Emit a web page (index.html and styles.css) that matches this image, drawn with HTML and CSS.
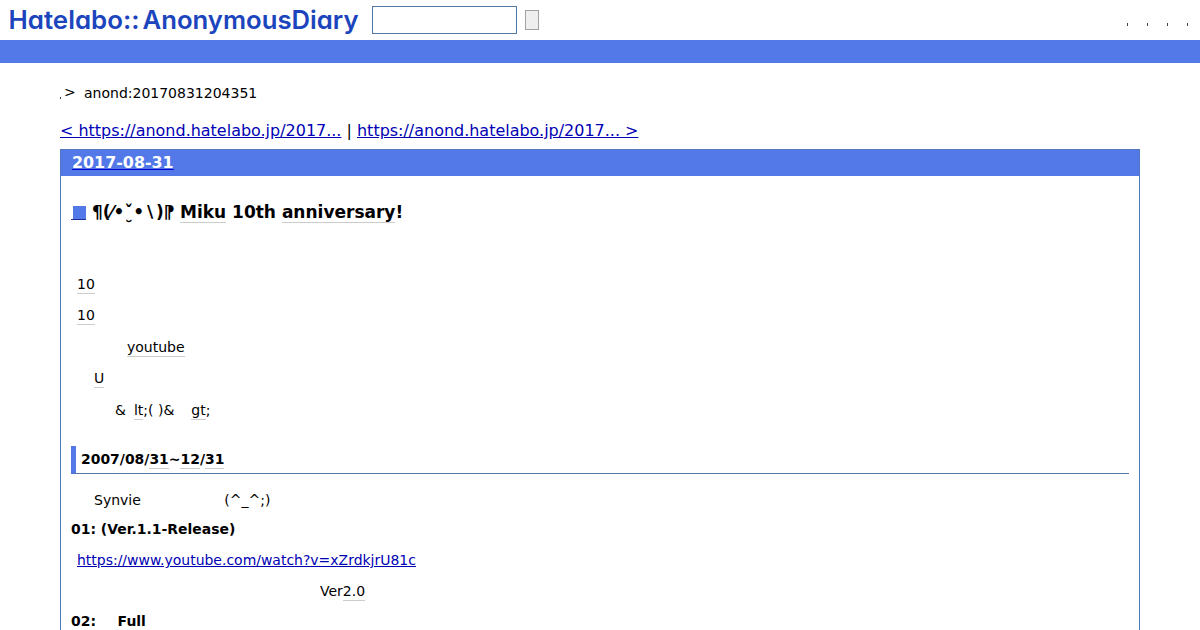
FILE: index.html
```html
<!DOCTYPE html>
<html lang="ja">
<head>
<meta charset="utf-8">
<title>Hatelabo::AnonymousDiary</title>
<link rel="stylesheet" href="styles.css">
</head>
<body>
<header class="header">
  <svg class="logo" width="362" height="40" viewBox="0 0 362 40">
    <text x="8.5" y="28.8" textLength="131" lengthAdjust="spacingAndGlyphs">Hatelabo::</text>
    <text x="142.5" y="28.8" textLength="216" lengthAdjust="spacingAndGlyphs">AnonymousDiary</text>
  </svg>
  <input class="search" type="text" aria-label="Search">
  <button class="submit" type="button" aria-label="Search"></button>
  <nav class="tools"><i></i><i></i><i></i><i></i></nav>
</header>
<div class="bar"></div>
<main class="main">
  <div class="crumbs"><i class="dot"></i><span class="gt">&gt;</span><span>anond:20170831204351</span></div>
  <div class="pager"><a href="#">&lt; https://anond.hatelabo.jp/2017...</a> | <a href="#">https://anond.hatelabo.jp/2017... &gt;</a></div>
  <article class="day">
    <h2 class="date"><a href="#">2017-08-31</a></h2>
    <div class="body">
      <h3 class="title"><a class="mark" href="#"><span class="square"></span></a><span class="face">¶(⁄•<span class="nose">ˇ&#x32E;</span>•∖)⁋</span><span><span class="key">Miku</span> 10th <span class="key">anniversary</span>!</span></h3>
      <p class="row"><span class="key">10</span></p>
      <p class="row"><span class="key">10</span></p>
      <p class="row youtube"><span class="key">youtube</span></p>
      <p class="row indent"><span class="key">U</span></p>
      <p class="row entity"><span class="amp">&amp;</span><span class="key">lt</span>;( )&amp;<span class="key after">gt</span>;</p>
      <h4 class="period">2007/08/<span class="key">31</span>~<span class="key">12</span>/<span class="key">31</span></h4>
      <p class="row indent synvie">Synvie<span class="smile">(^_^;)</span></p>
      <h5 class="song">01: (Ver.1.1-Release)</h5>
      <p class="row link"><a href="#">https://www.youtube.com/watch?v=xZrdkjrU81c</a></p>
      <p class="row version">Ver<span class="key">2.0</span></p>
      <h5 class="song">02:<span class="full">Full</span></h5>
    </div>
  </article>
</main>
</body>
</html>
```
FILE: styles.css
```css
* { box-sizing: border-box; }
html { height: 630px; overflow: hidden; }
body { margin: 0; height: 630px; overflow: hidden; background: #fff; color: #000; font: 14px "DejaVu Sans", sans-serif; }
h2, h3, h4, h5, p { margin: 0; }
a { color: #0000b4; }
.header { display: flex; align-items: center; height: 40px; }
.logo { display: block; fill: #1c45bd; font: 600 25.5px Inter, sans-serif; font-feature-settings: "cv11"; }
.search { width: 145px; height: 28px; margin-left: 10px; padding: 0 4px; border: 1px solid #5279a8; background: #fff; }
.submit { width: 14px; height: 20px; margin-left: 8px; padding: 0; border: 1px solid #a2a2a2; background: #efefef; }
.tools { display: flex; gap: 19px; margin: 9px 12px 0 auto; }
.tools i { width: 1px; height: 3px; background: #444; }
.bar { height: 23px; background: #5279e7; }
.main { padding: 20px 60px 0; }
.crumbs { display: flex; height: 20px; line-height: 20px; }
.dot { width: 1px; height: 2px; margin-top: 14px; background: #444; }
.gt { width: 20px; margin-left: 3px; line-height: 18px; }
.pager { height: 24px; margin-top: 16px; font-size: 15.98px; line-height: 24px; white-space: nowrap; }
.day { height: 481px; margin-top: 6px; border: 1px solid #5279c0; border-bottom: 0; overflow: hidden; }
.date { height: 26px; padding-left: 11px; background: #5279e7; font-size: 15.9px; line-height: 25px; }
.date a { color: #fff; text-decoration-color: #0000d0; }
.body { padding: 0 10px; }
.title { display: flex; height: 93px; padding-top: 24px; font-size: 17px; line-height: 24px; white-space: nowrap; }
.mark { width: 15px; height: 20px; padding-top: 6px; text-decoration: none; }
.square { display: block; width: 15px; height: 13px; border-left: 2px solid #fff; background: #5279e7; box-shadow: 0 1px #1c2f96; }
.face { width: 88px; margin-left: 6px; }
.nose { display: inline-block; width: 9px; font-size: 17px; text-align: center; }
.key { border-bottom: 1px solid #ccc; }
.row { height: 31.4px; padding-left: 6px; line-height: 31px; white-space: pre; }
.youtube { padding-left: 56px; }
.indent { padding-left: 23px; }
.entity { padding-left: 44px; }
.amp { margin-right: 8px; }
.after { margin-left: 17px; }
.row .key, .period .key { padding-bottom: 1px; }
.period { height: 28px; margin-top: 20px; padding-left: 5px; border-left: 5px solid #5279e7; border-bottom: 1px solid #5279a8; font-size: 13.95px; line-height: 27px; }
.synvie { height: 29.6px; margin-top: 11px; }
.smile { margin-left: 83.5px; }
.song { height: 28px; font-size: 13.95px; line-height: 28px; }
.link { height: 31px; margin-top: 2.8px; font-size: 13.97px; }
.version { height: 30.8px; padding-left: 249px; }
.full { margin-left: 21.6px; }
```
